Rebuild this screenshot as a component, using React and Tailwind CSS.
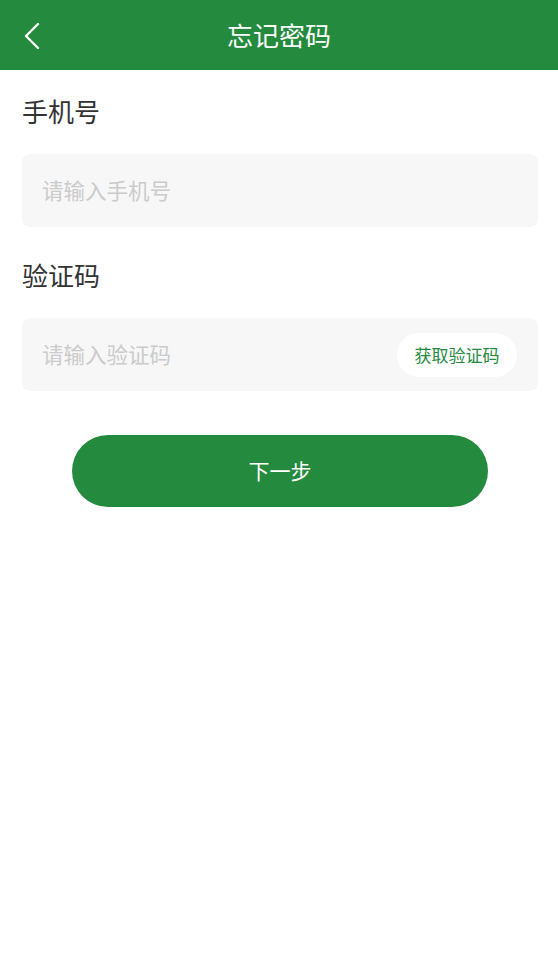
export default function App() {
  return (
    <div
      className="min-h-[957px] w-full bg-white"
      style={{ fontFamily: '"Noto Sans CJK SC", "Noto Sans", sans-serif' }}
    >
      <header className="relative flex h-[70px] items-center justify-center bg-[#248a3d]">
        <button className="absolute left-[22px] top-[22px] flex h-[28px] w-[22px] items-center">
          <svg width="20" height="28" viewBox="0 0 20 28" fill="none">
            <path d="M16 2 L4 14 L16 26" stroke="#fff" strokeWidth="2.4" strokeLinecap="round" strokeLinejoin="round" />
          </svg>
        </button>
        <h1 className="text-[26px] leading-none text-white">忘记密码</h1>
      </header>

      <main className="pl-[22px] pr-[20px]">
        <label className="mt-[24px] block text-[26px] leading-[34px] text-[#333]">手机号</label>
        <div className="mt-[26px] flex h-[73px] items-center rounded-[8px] bg-[#f7f7f7] px-[20px]">
          <span className="text-[21.5px] text-[#cbcbcb]">请输入手机号</span>
        </div>

        <label className="mt-[31px] block text-[26px] leading-[34px] text-[#333]">验证码</label>
        <div className="mt-[26px] flex h-[73px] items-center justify-between rounded-[8px] bg-[#f7f7f7] pl-[20px] pr-[21px]">
          <span className="text-[21.5px] text-[#cbcbcb]">请输入验证码</span>
          <button className="flex h-[44px] w-[120px] items-center justify-center rounded-full bg-white text-[17px] text-[#248a3d]">
            获取验证码
          </button>
        </div>

        <div className="mt-[44px] flex justify-center">
          <button className="flex h-[72px] w-[416px] items-center justify-center rounded-full bg-[#248a3d] text-[21px] text-white">
            下一步
          </button>
        </div>
      </main>
    </div>
  );
}
